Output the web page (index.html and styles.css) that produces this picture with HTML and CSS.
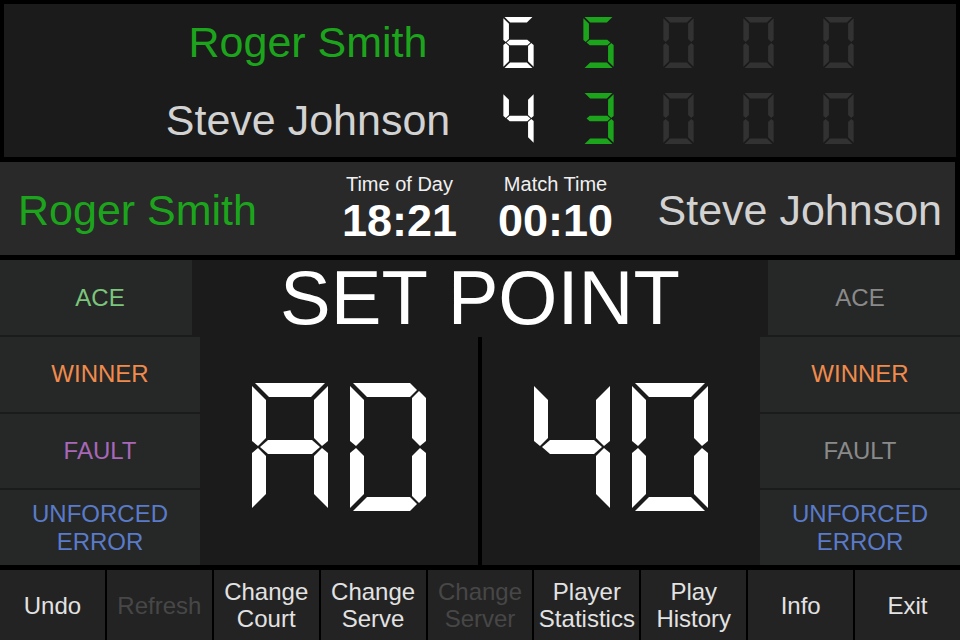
FILE: index.html
```html
<!DOCTYPE html>
<html lang="en">
<head>
  <meta charset="UTF-8">
  <title>Tennis Scoreboard</title>
  <link rel="stylesheet" href="styles.css">
</head>
<body>

  <!-- seven segment parts, 76 x 128 -->
  <svg class="defs" width="0" height="0">
    <defs>
      <polygon id="sa" points="3,0 73,0 59,14 17,14"/>
      <polygon id="sb" points="76,3 76,58 70,63 62,55 62,17"/>
      <polygon id="sc" points="70,65 76,70 76,125 62,111 62,73"/>
      <polygon id="sd" points="17,114 59,114 73,128 3,128"/>
      <polygon id="se" points="6,65 14,73 14,111 0,125 0,70"/>
      <polygon id="sf" points="0,3 14,17 14,55 6,63 0,58"/>
      <polygon id="sg" points="8,64 16,57 60,57 68,64 60,71 16,71"/>
      <polygon id="da" points="3,0 60,0 67,7 60,14 17,14"/>
      <polygon id="db" points="69,8 76,15 76,58 70,63 62,55 62,15"/>
      <polygon id="dc" points="70,65 76,70 76,113 69,120 62,113 62,73"/>
      <polygon id="dd" points="17,114 60,114 67,121 60,128 3,128"/>
    </defs>
  </svg>

  <div class="board">
    <div class="board-row">
      <div class="board-name green">Roger Smith</div>
      <div class="digits">
        <svg class="seg small white" viewBox="0 0 76 128"><use href="#sa"/><use href="#sc"/><use href="#sd"/><use href="#se"/><use href="#sf"/><use href="#sg"/></svg>
        <svg class="seg small green" viewBox="0 0 76 128"><use href="#sa"/><use href="#sc"/><use href="#sd"/><use href="#sf"/><use href="#sg"/></svg>
        <svg class="seg small dim" viewBox="0 0 76 128"><use href="#sa"/><use href="#sb"/><use href="#sc"/><use href="#sd"/><use href="#se"/><use href="#sf"/></svg>
        <svg class="seg small dim" viewBox="0 0 76 128"><use href="#sa"/><use href="#sb"/><use href="#sc"/><use href="#sd"/><use href="#se"/><use href="#sf"/></svg>
        <svg class="seg small dim" viewBox="0 0 76 128"><use href="#sa"/><use href="#sb"/><use href="#sc"/><use href="#sd"/><use href="#se"/><use href="#sf"/></svg>
      </div>
    </div>
    <div class="board-row">
      <div class="board-name grey">Steve Johnson</div>
      <div class="digits">
        <svg class="seg small white" viewBox="0 0 76 128"><use href="#sb"/><use href="#sc"/><use href="#sf"/><use href="#sg"/></svg>
        <svg class="seg small green" viewBox="0 0 76 128"><use href="#sa"/><use href="#sb"/><use href="#sc"/><use href="#sd"/><use href="#sg"/></svg>
        <svg class="seg small dim" viewBox="0 0 76 128"><use href="#sa"/><use href="#sb"/><use href="#sc"/><use href="#sd"/><use href="#se"/><use href="#sf"/></svg>
        <svg class="seg small dim" viewBox="0 0 76 128"><use href="#sa"/><use href="#sb"/><use href="#sc"/><use href="#sd"/><use href="#se"/><use href="#sf"/></svg>
        <svg class="seg small dim" viewBox="0 0 76 128"><use href="#sa"/><use href="#sb"/><use href="#sc"/><use href="#sd"/><use href="#se"/><use href="#sf"/></svg>
      </div>
    </div>
  </div>

  <div class="info-bar">
    <div class="info-name green">Roger Smith</div>
    <div class="clocks">
      <div class="clock">
        <div class="clock-label">Time of Day</div>
        <div class="clock-value">18:21</div>
      </div>
      <div class="clock">
        <div class="clock-label">Match Time</div>
        <div class="clock-value">00:10</div>
      </div>
    </div>
    <div class="info-name right grey">Steve Johnson</div>
  </div>

  <div class="court">
    <div class="court-top">
      <div class="cell ace-on left">ACE</div>
      <div class="status">SET POINT</div>
      <div class="cell muted right">ACE</div>
    </div>
    <div class="court-main">
      <div class="stack">
        <div class="cell winner">WINNER</div>
        <div class="cell fault">FAULT</div>
        <div class="cell unforced">UNFORCED<br>ERROR</div>
      </div>
      <div class="score">
        <svg class="seg big" viewBox="0 0 76 128"><use href="#sa"/><use href="#sb"/><use href="#sc"/><use href="#se"/><use href="#sf"/><use href="#sg"/></svg>
        <svg class="seg big" viewBox="0 0 76 128"><use href="#da"/><use href="#db"/><use href="#dc"/><use href="#dd"/><use href="#se"/><use href="#sf"/></svg>
      </div>
      <div class="divider"></div>
      <div class="score">
        <svg class="seg big" viewBox="0 0 76 128"><use href="#sb"/><use href="#sc"/><use href="#sf"/><use href="#sg"/></svg>
        <svg class="seg big" viewBox="0 0 76 128"><use href="#sa"/><use href="#sb"/><use href="#sc"/><use href="#sd"/><use href="#se"/><use href="#sf"/></svg>
      </div>
      <div class="stack">
        <div class="cell winner">WINNER</div>
        <div class="cell muted">FAULT</div>
        <div class="cell unforced">UNFORCED<br>ERROR</div>
      </div>
    </div>
  </div>

  <div class="toolbar">
    <button>Undo</button>
    <button class="off">Refresh</button>
    <button>Change<br>Court</button>
    <button>Change<br>Serve</button>
    <button class="off">Change<br>Server</button>
    <button>Player<br>Statistics</button>
    <button>Play<br>History</button>
    <button>Info</button>
    <button>Exit</button>
  </div>

</body>
</html>
```

FILE: styles.css
```css
body {
  margin: 0;
  width: 960px;
  height: 640px;
  overflow: hidden;
  background-color: #000;
  font-family: "Liberation Sans", Arial, sans-serif;
  color: #fff;
}

.defs {
  position: absolute;
}

.green {
  color: #1ca51c;
}

.grey {
  color: #d2d2d2;
}

/* top score board */
.board {
  margin: 4px 4px 0;
  height: 153px;
  background-color: #1b1b1b;
}

.board-row {
  display: flex;
  align-items: center;
  height: 76.5px;
}

.board-name {
  width: 304px;
  margin-left: 152px;
  text-align: center;
  font-size: 43px;
  white-space: nowrap;
}

.board-row + .board-row .board-name {
  padding-top: 3px;
}

.digits {
  display: flex;
  gap: 49px;
  margin-left: 43px;
}

.seg.small {
  width: 31px;
  height: 51px;
}

.seg.white {
  fill: #fff;
}

.seg.green {
  fill: #1ca51c;
}

.seg.dim {
  fill: #323232;
}

/* names and clocks */
.info-bar {
  display: grid;
  grid-template-columns: 1fr auto 1fr;
  align-items: center;
  margin: 5px 5px 0 0;
  height: 93px;
  background-color: #292929;
}

.info-name {
  font-size: 43px;
  padding-left: 18px;
  padding-top: 3px;
  white-space: nowrap;
}

.info-name.right {
  text-align: right;
  padding-left: 0;
  padding-right: 13px;
}

.clocks {
  display: flex;
  gap: 41px;
}

.clock {
  text-align: center;
}

.clock-label {
  font-size: 20px;
  line-height: 24px;
  color: #f0f0f0;
}

.clock-value {
  font-size: 45px;
  font-weight: bold;
  line-height: 50px;
}

/* court */
.court {
  margin-top: 5px;
  height: 305px;
  background-color: #1b1b1b;
}

.court-top {
  display: grid;
  grid-template-columns: 192px 1fr 192px;
  height: 75px;
}

.status {
  text-align: center;
  font-size: 76px;
  line-height: 75px;
}

.court-main {
  display: grid;
  grid-template-columns: 200px 1fr 4px 1fr 200px;
  height: 228px;
  margin-top: 2px;
}

.stack {
  display: flex;
  flex-direction: column;
  gap: 2px;
}

.cell {
  flex: 1;
  display: flex;
  align-items: center;
  justify-content: center;
  text-align: center;
  background-color: #262727;
  font-size: 24px;
  line-height: 28px;
}

.cell.left {
  padding-left: 8px;
}

.cell.right {
  padding-right: 8px;
}

.ace-on {
  color: #7cc57c;
}

.muted {
  color: #8a8a8a;
}

.winner {
  color: #f08b4c;
}

.fault {
  color: #a867b8;
}

.unforced {
  color: #5a7bc9;
}

.score {
  display: flex;
  align-items: center;
  justify-content: center;
  gap: 22px;
  padding-bottom: 8px;
}

.seg.big {
  width: 76px;
  height: 128px;
  fill: #fff;
}

.divider {
  background-color: #000;
}

/* bottom buttons */
.toolbar {
  display: grid;
  grid-template-columns: repeat(9, 1fr);
  gap: 2px;
  margin-top: 5px;
  height: 70px;
}

.toolbar button {
  padding: 0;
  border: none;
  background-color: #232323;
  color: #e2e2e2;
  font-family: "Liberation Sans", Arial, sans-serif;
  font-size: 24px;
  line-height: 27px;
  white-space: nowrap;
}

.toolbar button.off {
  color: #474747;
}
```
